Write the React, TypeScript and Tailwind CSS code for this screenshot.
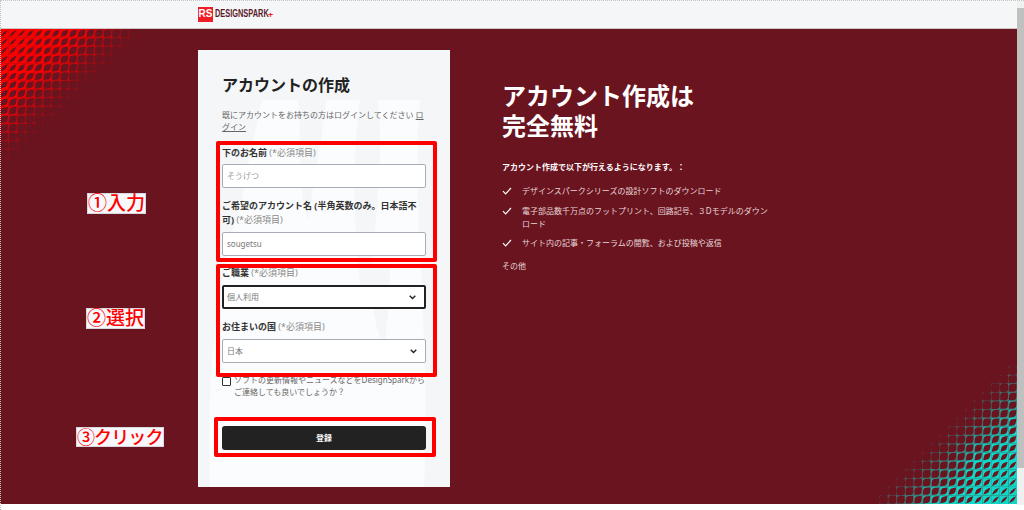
import type { ReactNode } from 'react';

const JP = { fontFamily: '"Noto Sans","Noto Sans CJK JP",sans-serif' };

function Corner({ color, flip, w, h }: { color: string; flip?: boolean; w: number; h: number }) {
  const cell = 8.6;
  const cols = Math.ceil(w / cell);
  const rows = Math.ceil(h / cell);
  const items: ReactNode[] = [];
  for (let y = 0; y < rows; y++) {
    for (let x = 0; x < cols; x++) {
      const t = 1 - ((x + 0.5) * cell) / w - ((y + 0.5) * cell) / h;
      if (t <= 0) continue;
      const k = Math.min(1, t * 1.25);
      const cx = x * cell + cell / 2;
      const cy = y * cell + cell / 2;
      const half = cell / 2 - 0.4 - k * 0.5;
      const c = 1.3 - k * 0.95;
      const f = (n: number) => n.toFixed(2);
      const square = `M${f(cx - cell / 2)} ${f(cy - cell / 2)}h${cell}v${cell}h${-cell}Z`;
      const hole =
        `M${f(cx - half)} ${f(cy + half)}` +
        `C${f(cx - half * c)} ${f(cy - half * c)} ${f(cx - half * c)} ${f(cy - half * c)} ${f(cx + half)} ${f(cy - half)}` +
        `C${f(cx + half * c)} ${f(cy + half * c)} ${f(cx + half * c)} ${f(cy + half * c)} ${f(cx - half)} ${f(cy + half)}Z`;
      items.push(
        <path key={`${x}-${y}`} d={square + hole} fill={color} fillRule="evenodd" opacity={Math.min(1, 0.22 + t * 1.7)} />
      );
    }
  }
  return (
    <svg width={w} height={h} viewBox={`0 0 ${w} ${h}`} className="block" style={flip ? { transform: 'rotate(180deg)' } : undefined}>
      {items}
    </svg>
  );
}

function Label({ children }: { children: ReactNode }) {
  return (
    <div className="text-[9px] leading-[14px] font-bold text-[#333]">
      {children} <span className="font-normal text-[#8a8a8a]">(*必須項目)</span>
    </div>
  );
}

function Chevron() {
  return (
    <svg width="7" height="5" viewBox="0 0 7 5" fill="none" stroke="#222" strokeWidth="1.4">
      <path d="M.7.8l2.8 2.8L6.3.8" />
    </svg>
  );
}

function Check() {
  return (
    <svg width="10" height="8" viewBox="0 0 10 8" fill="none" stroke="#fff" strokeWidth="1.2" className="mt-[3px] shrink-0">
      <path d="M1 4.2l2.6 2.6L9 1" />
    </svg>
  );
}

export default function App() {
  return (
    <div className="relative h-[510px] w-[1024px] overflow-hidden flex flex-col bg-white" style={JP}>
      <header className="h-[29px] shrink-0 bg-[#f4f6f8] border-b border-[#cfc4c6] pl-[198px] flex items-center">
        <div className="flex h-[15px] w-[15px] items-center justify-center bg-[#ee1c25] text-[10px] font-bold leading-none text-white" style={{ fontFamily: '"Liberation Sans",sans-serif' }}>
          RS
        </div>
        <span className="ml-[2px] w-[53px] whitespace-nowrap text-[10px] font-bold leading-none text-[#5a1a28] [transform:scaleX(0.74)] origin-left" style={{ fontFamily: '"Liberation Sans",sans-serif' }}>
          DESIGNSPARK
        </span>
        <span className="text-[9px] font-bold leading-none text-[#ee1c25]">+</span>
      </header>

      <div className="relative h-[475px] shrink-0 bg-[#6a141f] flex items-start">
        <div className="absolute left-0 top-0">
          <Corner color="#ff0000" w={146} h={138} />
        </div>
        <div className="absolute right-[7px] bottom-0">
          <Corner color="#10d8c8" flip w={146} h={146} />
        </div>

        <span className="absolute left-[87px] top-[164px] border border-[#d8d8e0] bg-[#f6f8fb] text-[19px] leading-[19px] font-medium text-[#ff0000]">①入力</span>
        <span className="absolute left-[86px] top-[279px] border border-[#d8d8e0] bg-[#f6f8fb] text-[19px] leading-[19px] font-medium text-[#ff0000]">②選択</span>
        <span className="absolute left-[76px] top-[398px] border border-[#d8d8e0] bg-[#f6f8fb] text-[18px] leading-[18px] tracking-[-0.9px] font-medium text-[#ff0000]">③クリック</span>

        <main className="relative ml-[198px] mt-[21px] h-[437px] w-[252px] shrink-0 bg-[#f4f6f8] px-[24px] pt-[22px]">
          <svg className="absolute left-0 top-0" width="252" height="437" viewBox="0 0 252 437">
            <path d="M12 437C8 330 18 230 44 150C50 110 60 70 64 50H100C104 90 98 130 110 170C116 130 124 90 128 50H162C150 130 160 280 172 240C176 180 186 120 180 50H222C212 150 234 300 226 437Z" fill="#fbfcfd" />
            <path d="M170 215C172 250 178 280 186 300C190 270 192 240 192 215Z" fill="#f4f6f8" />
          </svg>
          <div className="relative">
            <h1 className="text-[16px] leading-[26px] font-bold text-[#222]">アカウントの作成</h1>
            <p className="mt-[11px] w-[204px] text-[8px] leading-[12px] text-[#666]">
              既にアカウントをお持ちの方はログインしてください <span className="underline">ログイン</span>
            </p>
            <div className="mt-[13px]"><Label>下のお名前</Label></div>
            <div className="mt-[4px] flex h-[24px] w-[204px] items-center rounded-[2px] border border-[#a8adb5] bg-white px-[4px] text-[8px] text-[#9a9a9a]">そうげつ</div>
            <div className="mt-[11px] w-[204px] text-[9px] leading-[14px] font-bold text-[#333]">
              ご希望のアカウント名 (半角英数のみ。日本語不可) <span className="font-normal text-[#8a8a8a]">(*必須項目)</span>
            </div>
            <div className="mt-[5px] flex h-[24px] w-[204px] items-center rounded-[2px] border border-[#a8adb5] bg-white px-[4px] text-[8px] text-[#777]">sougetsu</div>
            <div className="mt-[10px]"><Label>ご職業</Label></div>
            <div className="mt-[5px] flex h-[24px] w-[204px] items-center justify-between rounded-[2px] border-2 border-[#222] bg-white pl-[3px] pr-[8px] text-[8px] text-[#777]">
              個人利用<Chevron />
            </div>
            <div className="mt-[11px]"><Label>お住まいの国</Label></div>
            <div className="mt-[5px] flex h-[24px] w-[204px] items-center justify-between rounded-[2px] border border-[#a8adb5] bg-white pl-[4px] pr-[8px] text-[8px] text-[#777]">
              日本<Chevron />
            </div>
            <div className="mt-[11px] flex w-[206px] items-start gap-[3px]">
              <span className="mt-[3px] h-[9px] w-[9px] shrink-0 rounded-[1px] border border-[#333] bg-white" />
              <span className="text-[8px] leading-[12px] text-[#666]">ソフトの更新情報やニュースなどをDesignSparkからご連絡しても良いでしょうか？</span>
            </div>
            <button className="mt-[28px] block h-[24px] w-[204px] rounded-[3px] bg-[#222] text-[8px] font-bold text-white">登録</button>
          </div>

          <div className="pointer-events-none absolute left-[18px] top-[91px] h-[121px] w-[221px] rounded-[2px] border-[4px] border-[#ff0000]" />
          <div className="pointer-events-none absolute left-[18px] top-[214px] h-[113px] w-[221px] rounded-[2px] border-[4px] border-[#ff0000]" />
          <div className="pointer-events-none absolute left-[16px] top-[367px] h-[40px] w-[222px] rounded-[2px] border-[4px] border-[#ff0000]" />
        </main>

        <section className="ml-[52px] mt-[52px] w-[270px] text-white">
          <h2 className="text-[24px] leading-[30px] font-bold">アカウント作成は<br />完全無料</h2>
          <p className="mt-[20px] text-[8px] leading-[12px] font-bold">アカウント作成で以下が行えるようになります。：</p>
          <ul className="mt-[11px] flex flex-col gap-[6.5px] text-[8px] leading-[13px] text-[#e6d6d8]">
            <li className="flex gap-[10px]"><Check /><span>デザインスパークシリーズの設計ソフトのダウンロード</span></li>
            <li className="flex gap-[10px]"><Check /><span>電子部品数千万点のフットプリント、回路記号、３Dモデルのダウンロード</span></li>
            <li className="flex gap-[10px]"><Check /><span>サイト内の記事・フォーラムの閲覧、および投稿や返信</span></li>
          </ul>
          <p className="mt-[10px] text-[8px] leading-[13px] text-[#e6d6d8]">その他</p>
        </section>
      </div>

      <div className="absolute right-0 top-0 flex h-[505px] w-[7px] flex-col bg-[#f0f0f0]">
        <div className="mt-[8px] h-[460px] bg-[#c0c0c0]" />
      </div>
      <div className="pointer-events-none absolute inset-0 border-t border-l border-dotted border-[#c4c4c4]" />
    </div>
  );
}
